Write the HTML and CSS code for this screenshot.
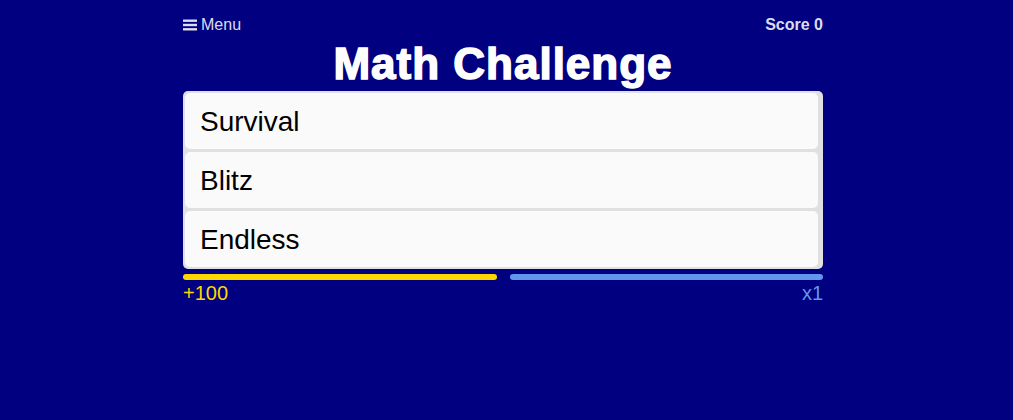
FILE: index.html
```html
<!DOCTYPE html>
<html>
<head>
<meta charset="utf-8">
<link rel="stylesheet" href="styles.css">
</head>
<body>
<div class="app">
  <div class="topbar">
    <div class="menu-btn">
      <svg class="burger" width="14" height="12" viewBox="0 0 14 12"><rect x="0" y="0.5" width="14" height="2.4" fill="#dcdcec"/><rect x="0" y="4.8" width="14" height="2.4" fill="#dcdcec"/><rect x="0" y="9.1" width="14" height="2.4" fill="#dcdcec"/></svg>
      <span>Menu</span>
    </div>
    <div class="score">Score 0</div>
  </div>
  <h1 class="title">Math Challenge</h1>
  <div class="modes">
    <div class="mode">Survival</div>
    <div class="mode">Blitz</div>
    <div class="mode">Endless</div>
  </div>
  <div class="bars">
    <div class="bar bar-yellow"></div>
    <div class="bar bar-blue"></div>
  </div>
  <div class="labels">
    <span class="points">+100</span>
    <span class="mult">x1</span>
  </div>
</div>
</body>
</html>
```

FILE: styles.css
```css
html, body {
  margin: 0;
  padding: 0;
  background: #000080;
}
body {
  padding-right: 7px;
  font-family: "Liberation Sans", Arial, sans-serif;
}
.app {
  width: 640px;
  margin: 0 auto;
  padding-top: 16px;
}
.topbar {
  display: flex;
  justify-content: space-between;
  align-items: center;
  height: 18px;
  font-size: 16px;
  color: #dcdcec;
}
.menu-btn {
  display: flex;
  align-items: center;
  gap: 4px;
}
.score {
  font-weight: bold;
}
.title {
  margin: 0;
  text-align: center;
  color: #fff;
  font-size: 44px;
  font-weight: 900;
  letter-spacing: 1px;
  -webkit-text-stroke: 1.5px #fff;
  line-height: 60px;
  height: 57px;
}
.modes {
  background: #e0e0e0;
  border-radius: 5px;
  padding: 2px 5px 2px 2px;
  display: flex;
  flex-direction: column;
  gap: 3px;
}
.mode {
  background: #fafafa;
  border-radius: 5px;
  height: 56px;
  box-sizing: border-box;
  display: flex;
  align-items: center;
  padding: 1px 0 0 15px;
  font-size: 28px;
  color: #000;
}
.bars {
  display: flex;
  gap: 13px;
  margin-top: 5px;
}
.bar {
  flex: 1;
  height: 6px;
  border-radius: 3px;
}
.bar-yellow { background: #ffd700; }
.bar-blue { background: #6495ed; }
.labels {
  display: flex;
  justify-content: space-between;
  font-size: 20px;
  line-height: 26px;
}
.points { color: #ffd700; }
.mult { color: #6495ed; }
```
